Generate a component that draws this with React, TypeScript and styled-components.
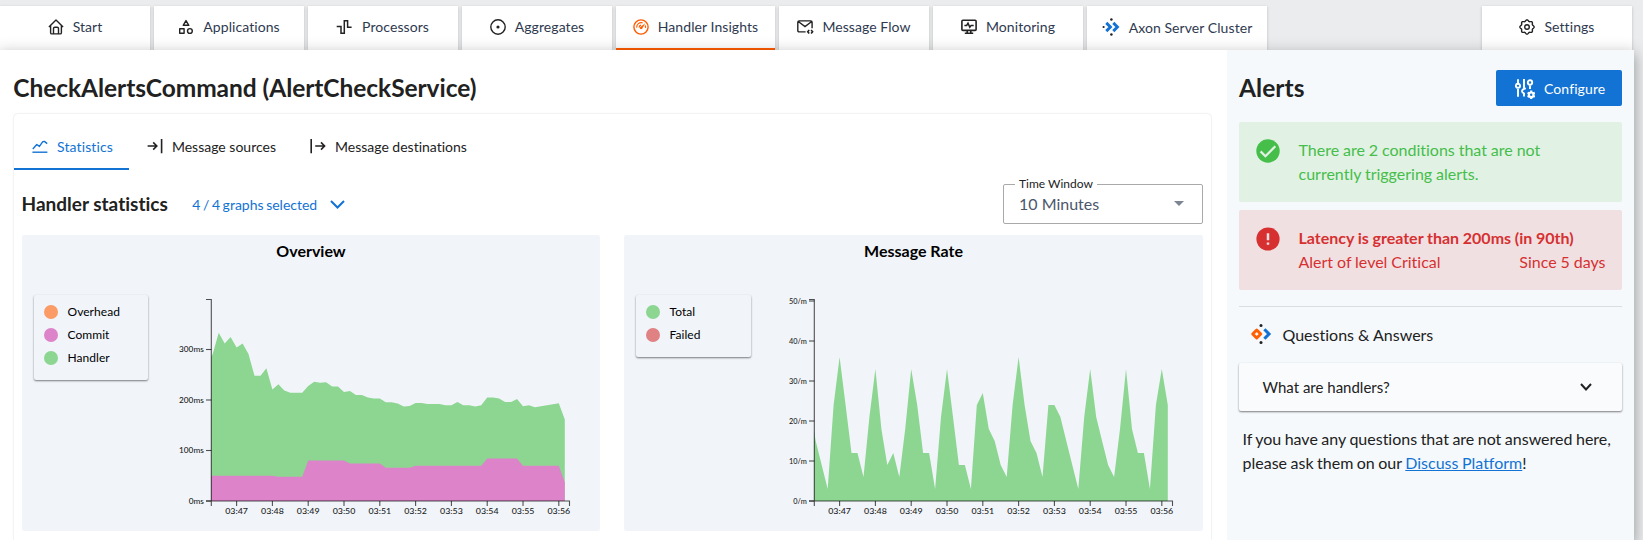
import React from 'react';
import styled, { createGlobalStyle } from 'styled-components';

const GlobalStyle = createGlobalStyle`
  * { box-sizing: border-box; }
  html, body { margin: 0; height: 540px; overflow: hidden; }
  body { background: #ebecee; color: #212121; font-family: Lato, sans-serif; font-variant-ligatures: none; }
  h1, h2, h3, p { margin: 0; }
  svg { display: block; flex: none; }
`;

/* ---------- icons ---------- */

const Glyph = styled.svg.attrs({ viewBox: '0 0 16 16' })`
  width: 16px;
  height: 16px;
  fill: none;
  stroke: currentColor;
  stroke-width: 1.4;
  overflow: visible;
`;

const HomeIcon = () => (
  <Glyph>
    <path d="M.9 8 8 1.1 15.1 8M2.6 6.6v7.1q0 1.2 1.2 1.2h8.4q1.2 0 1.2-1.2V6.6M5.5 14.8V9.6q0-1.3 1.3-1.3h2.4q1.3 0 1.3 1.3v5.2" strokeLinejoin="round" />
  </Glyph>
);

const ShapesIcon = () => (
  <Glyph strokeLinejoin="round">
    <path d="M8 1.6 10.8 6.3H5.2ZM1.7 9.7H6.1V14.3H1.7Z" />
    <circle cx="11.9" cy="12" r="2.4" />
  </Glyph>
);

const PulseIcon = () => (
  <Glyph>
    <path d="M-.3 7.4H4V14.2H7.3V1.7H10.6V8.2H14.6" strokeWidth="1.5" />
  </Glyph>
);

const TargetIcon = () => (
  <Glyph>
    <circle cx="8" cy="8" r="7.2" />
    <circle cx="8" cy="8" r="1.6" fill="currentColor" stroke="none" />
  </Glyph>
);

const GaugeIcon = () => (
  <Glyph>
    <circle cx="8" cy="8" r="7.1" />
    <path d="M3.7 8.6A4.5 4.5 0 0 1 9.6 3.9M6.2 8.6A2.4 2.4 0 0 1 8 6.1" strokeWidth="1.2" />
    <path d="M12.2 4.2 9.3 9.6A1.3 1.3 0 0 1 7 8.3Z" fill="currentColor" stroke="none" />
    <path d="M12 6.4Q12.7 7.4 12.5 8.8" strokeWidth="1.1" />
  </Glyph>
);

const MailIcon = () => (
  <Glyph>
    <path d="M8.6 12.9H2.2Q.8 12.9.8 11.5V3.3Q.8 1.9 2.2 1.9H13.7Q15.1 1.9 15.1 3.3V9.3M1.6 2.7 8 7.6 14.4 2.7" />
    <path d="M12.2 11 10.7 12.8 12.2 14.6M14.1 11 15.6 12.8 14.1 14.6" strokeWidth="1.6" />
  </Glyph>
);

const MonitorIcon = () => (
  <Glyph>
    <rect x=".9" y="1.2" width="14.2" height="10.2" rx="1" strokeWidth="1.6" />
    <path d="M3.4 6.4H5.7L7 4.2 8.8 8.2 10.1 6.4H12.7" strokeWidth="1.5" />
    <path d="M6.2 11.4V14.6M9.8 11.4V14.6M3.8 14.3H12.2" strokeWidth="1.6" />
  </Glyph>
);

const GearIcon = () => {
  const steps = Array.from({ length: 96 }, (_, i) => {
    const a = (i / 96) * Math.PI * 2;
    const r = 6.5 + 0.65 * Math.cos(a * 8);
    return `${(8 + r * Math.cos(a)).toFixed(2)} ${(8 + r * Math.sin(a)).toFixed(2)}`;
  });
  return (
    <Glyph>
      <path d={`M${steps.join('L')}Z`} />
      <circle cx="8" cy="8" r="2.3" />
    </Glyph>
  );
};

const AxonIcon = () => (
  <svg width="18" height="18" viewBox="0 0 18 18" fill="none">
    <path d="M4.3 4.9 8.4 9 4.3 13.1M11.3 4.9 15.4 9 11.3 13.1" stroke="#1273d4" strokeWidth="2.9" />
    <circle cx="9.4" cy="1.6" r="1.25" fill="#222" />
    <circle cx="9.4" cy="16.4" r="1.25" fill="#222" />
    <circle cx="1.6" cy="9" r="1.1" fill="#222" />
  </svg>
);

const QuestionsIcon = () => (
  <svg width="22" height="22" viewBox="0 0 22 22" fill="none">
    <path d="M6.7 7 10.7 11 6.7 15 2.7 11Z" stroke="#ff6000" strokeWidth="3" strokeLinejoin="round" />
    <path d="M14.4 6.2 19 11 14.4 15.8" stroke="#1273d4" strokeWidth="3.1" />
    <circle cx="11" cy="2.5" r="1.5" fill="#222" />
    <circle cx="11" cy="19.5" r="1.5" fill="#222" />
  </svg>
);

const StatsIcon = () => (
  <Glyph>
    <path d="M.8 11 4.8 6.5 7.4 8.4 10.8 3.6 12.4 3.4 15.2 5.6" strokeLinejoin="round" />
    <path d="M.4 14.2H15.4" />
  </Glyph>
);

const SourceIcon = () => (
  <Glyph>
    <path d="M.6 8H9.6M6.2 4.4 9.8 8 6.2 11.6M14.6 1V15.2" strokeWidth="1.6" />
  </Glyph>
);

const DestinationIcon = () => (
  <Glyph>
    <path d="M1.2 1V15.2M5.2 8H14.6M11 4.4 14.6 8 11 11.6" strokeWidth="1.6" />
  </Glyph>
);

const TuneIcon = () => (
  <svg width="20" height="20" viewBox="0 0 20 20" fill="none" stroke="#fff" strokeWidth="1.9">
    <path d="M3 .3V4M3 10V17.8M9 0V9.5M9 14V17.5M15 6.6V10" />
    <circle cx="3" cy="6.8" r="2.1" fill="#1273d4" />
    <circle cx="15" cy="3.5" r="2.2" />
    <path d="M10.9 9.4Q7 10 7 12.3 7 13.7 9.3 14.5" />
    <circle cx="16.2" cy="15.8" r="2.3" strokeWidth="2.2" />
    <path d="M16.2 11.6V13.6M16.2 18V20M12.6 13.7 14.3 14.7M18.1 16.9 19.8 17.9M19.8 13.7 18.1 14.7M14.3 16.9 12.6 17.9" strokeWidth="2.1" />
  </svg>
);

const CheckBadge = () => (
  <svg width="24" height="24" viewBox="0 0 24 24">
    <circle cx="12" cy="12" r="11.7" fill="#45be4a" />
    <path d="M4.6 12.4 9.4 17.2 19.3 7.2" fill="none" stroke="#e1f1e4" strokeWidth="2.3" />
  </svg>
);

const ErrorBadge = () => (
  <svg width="24" height="24" viewBox="0 0 24 24">
    <circle cx="12" cy="12" r="11.6" fill="#d63031" />
    <path d="M12 6.3V13.2M12 15.4V17.8" fill="none" stroke="#f1e0e2" strokeWidth="2.5" />
  </svg>
);

const Chevron = ({ width, height, weight }: { width: number; height: number; weight: number }) => (
  <svg width={width} height={height} fill="none" stroke="currentColor" strokeWidth={weight}>
    <path d={`M1 1 ${width / 2} ${height - 1.5} ${width - 1} 1`} />
  </svg>
);

/* ---------- navigation ---------- */

const NavBar = styled.nav`
  display: flex;
  gap: 4px;
  height: 50px;
  padding: 6px 11px 0 0;
`;

const NavTab = styled.a<{ $active?: boolean; $width?: number; $last?: boolean }>`
  display: flex;
  align-items: center;
  justify-content: center;
  gap: 9px;
  width: ${(p) => p.$width ?? 150}px;
  height: 44px;
  margin-left: ${(p) => (p.$last ? 'auto' : '0')};
  background: #fff;
  border-bottom: 2px solid ${(p) => (p.$active ? '#ff5c00' : 'transparent')};
  box-shadow: 0 1px 3px rgba(0, 0, 0, 0.2);
  color: #222;
  font-size: 14px;
  letter-spacing: 0.07px;
`;

const NavLabel = styled.span<{ $drop?: number }>`
  color: #2f3a50;
  padding-top: ${(p) => p.$drop ?? 0}px;
  padding-bottom: ${(p) => (p.$drop ? 0 : 1)}px;
`;

const tabs = [
  { label: 'Start', icon: <HomeIcon /> },
  { label: 'Applications', icon: <ShapesIcon /> },
  { label: 'Processors', icon: <PulseIcon /> },
  { label: 'Aggregates', icon: <TargetIcon /> },
  { label: 'Message Flow', icon: <MailIcon /> },
  { label: 'Monitoring', icon: <MonitorIcon /> },
];

const ActiveIcon = styled.span`
  color: #ff5c00;
`;

/* ---------- page ---------- */

const Page = styled.div`
  position: relative;
  display: flex;
  width: 1634px;
  height: 490px;
  background: #fff;
  box-shadow: 0 3px 14px 2px rgba(0, 0, 0, 0.2), 0 8px 10px 1px rgba(0, 0, 0, 0.14);
`;

const Content = styled.main`
  display: flex;
  flex-direction: column;
  width: 1227px;
  padding: 22px 16px 0 14px;
`;

const Title = styled.h1`
  margin-left: -0.7px;
  font-size: 24.5px;
  line-height: 32px;
  font-weight: 700;
  letter-spacing: -0.05px;
`;

const Card = styled.section`
  flex: 1;
  margin-top: 10px;
  border-radius: 4px 4px 0 0;
  box-shadow: 0 0 2px rgba(0, 0, 0, 0.18);
`;

const SubTabs = styled.div`
  display: flex;
  height: 56px;
`;

const SubTab = styled.div<{ $active?: boolean }>`
  display: flex;
  align-items: center;
  gap: 9px;
  padding: 10px 16px 0 18px;
  border-bottom: 2px solid ${(p) => (p.$active ? '#1273d4' : 'transparent')};
  color: ${(p) => (p.$active ? '#1273d4' : '#222')};
  font-size: 14px;
  letter-spacing: ${(p) => (p.$active ? 0.12 : 0)}px;
`;

const Toolbar = styled.div`
  display: flex;
  align-items: flex-start;
  height: 65px;
  padding: 14px 8px 0 7.5px;
`;

const SectionTitle = styled.h2`
  font-size: 19px;
  line-height: 24px;
  padding-top: 8px;
`;

const GraphPicker = styled.div`
  display: flex;
  align-items: center;
  gap: 13px;
  margin-left: 24.5px;
  padding-top: 12px;
  color: #1273d4;
  font-size: 14px;
  word-spacing: -1px;
`;

const Select = styled.fieldset`
  display: flex;
  align-items: center;
  justify-content: space-between;
  width: 200px;
  height: 47px;
  margin: -7px 0 0 auto;
  padding: 0 18px 7px 15px;
  border: 1px solid #a9a9a9;
  border-radius: 2px;
  color: #4b566b;
  font-size: 16px;
`;

const SelectLabel = styled.legend`
  margin-left: -4px;
  padding: 0 4px;
  color: #222;
  font-size: 12px;
  line-height: 14px;
`;

const Caret = styled.span`
  border: 5px solid transparent;
  border-top-color: #7d8594;
  border-bottom: 0;
`;

const Graphs = styled.div`
  display: grid;
  grid-template-columns: 578px 579px;
  justify-content: space-between;
  padding: 0 8px;
`;

const Panel = styled.article`
  height: 296px;
  padding: 6px 12px 0;
  background: #f1f5fa;
  border-radius: 2px;
`;

const PanelTitle = styled.h3`
  height: 54px;
  text-align: center;
  color: #000;
  font-size: 16px;
  line-height: 20px;
`;

const PanelBody = styled.div`
  display: flex;
  align-items: flex-start;
  gap: 22px;
`;

const Legend = styled.ul<{ $width: number }>`
  width: ${(p) => p.$width}px;
  margin: 0;
  padding: 5px 10px 11px;
  list-style: none;
  border-radius: 2px;
  box-shadow: 0 1px 2px rgba(0, 0, 0, 0.5);
  color: #000;
  font-size: 12px;
`;

const LegendItem = styled.li<{ $color: string }>`
  display: flex;
  align-items: center;
  gap: 9.5px;
  height: 23px;
  letter-spacing: 0.05px;
  &::before {
    content: '';
    width: 14px;
    height: 14px;
    border-radius: 50%;
    background: ${(p) => p.$color};
  }
`;

const Plot = styled.svg`
  font: 500 7.5px Lato, sans-serif;
  fill: #222;
`;

type Series = { color: string; values: number[] };

type ChartProps = {
  id: string;
  series: Series[];
  unitHeight: number;
  ticks: { value: number; label: string }[];
  labelWidth: number;
};

const LEFT = 41.3;
const TOP = 4.5;
const BASE = 206;
const FIRST = 66.6;
const STEP = 5.967;

const Chart = ({ id, series, unitHeight, ticks, labelWidth }: ChartProps) => (
  <Plot width="405" height="222">
    <clipPath id={id}>
      <rect x={LEFT} y={TOP} width="358" height={BASE - TOP} />
    </clipPath>
    <g clipPath={`url(#${id})`}>
      {series.map((s) => {
        const x = (i: number) => FIRST + (i - 5) * STEP;
        const line = s.values.map((v, i) => `${x(i).toFixed(1)} ${(BASE - v * unitHeight).toFixed(1)}`);
        return (
          <path
            key={s.color}
            fill={s.color}
            d={`M${x(0)} ${BASE}L${line.join('L')}L${x(s.values.length - 1)} ${BASE}Z`}
          />
        );
      })}
    </g>
    <g fill="none" stroke="#000" strokeOpacity=".68" strokeWidth="1.1">
      <path d={`M36 ${TOP}H${LEFT}V${BASE}H36M${LEFT} ${BASE + 5}V${BASE}H399.5V${BASE + 5}`} />
      {ticks.map((t) => (
        <path key={t.value} d={`M36 ${BASE - t.value * unitHeight}H${LEFT}`} />
      ))}
      {Array.from({ length: 10 }, (_, i) => (
        <path key={i} d={`M${FIRST + i * 6 * STEP} ${BASE}v5`} />
      ))}
    </g>
    {ticks.map((t) => (
      <text
        key={t.value}
        textAnchor="end"
        transform={`translate(33.8 ${BASE - t.value * unitHeight + 2.7}) scale(${labelWidth} 1)`}
      >
        {t.label}
      </text>
    ))}
    {Array.from({ length: 10 }, (_, i) => (
      <text key={i} textAnchor="middle" transform={`translate(${FIRST + i * 6 * STEP} 219) scale(1.18 1)`}>
        03:{47 + i}
      </text>
    ))}
  </Plot>
);

const run = (...pairs: [number, number][]) => pairs.flatMap(([v, n]) => Array<number>(n).fill(v));

const handlerMs = [
  270, 291, 333, 312, 325, 304, 312, 291, 248, 248, 263, 221, 231, 219, 214.5, 214.5, 214.5, 228, 236, 234, 235, 226.5,
  226.5, 216, 218, 210, 210, 205, 203, 203, 195.5, 195.5, 193, 187, 188, 194, 194, 192, 192, 192, 189.5, 189.5, 196,
  189.5, 189.5, 187, 189.5, 205, 205, 203, 196, 196, 202, 187.5, 189.5, 185.5, 187.5, 189.5, 191.5, 193.5, 161.5,
];

const commitMs = run([50, 12], [48, 5], [80, 7], [74, 6], [66, 5], [70, 12], [84, 6], [70, 7], [37, 1]);

const messageRate = [
  24, 15, 9, 3, 24, 36, 24, 12, 12, 6, 21, 33, 18, 9, 12, 6, 18, 33, 24, 12, 12, 3, 21, 33, 21, 9, 9, 3, 24, 27, 18, 15,
  9, 6, 24, 36, 24, 15, 12, 6, 24, 24, 21, 15, 9, 3, 21, 33, 21, 15, 9, 6, 18, 33, 18, 12, 12, 3, 24, 33, 24,
];

/* ---------- sidebar ---------- */

const Sidebar = styled.aside`
  width: 407px;
  padding: 20px 12px 0;
  background: #f5f9fc;
`;

const SidebarHead = styled.header`
  display: flex;
  align-items: center;
  justify-content: space-between;
  height: 36px;
  margin-bottom: 16px;
`;

const SidebarTitle = styled(Title)`
  margin-left: 0;
  letter-spacing: 0.05px;
`;

const ConfigureButton = styled.button`
  display: flex;
  align-items: center;
  gap: 9px;
  width: 126px;
  height: 36px;
  padding: 1px 0 0 19px;
  border: 0;
  border-radius: 2px;
  background: #1273d4;
  color: #fff;
  font: 14px Lato, sans-serif;
  letter-spacing: 0.1px;
  font-variant-ligatures: none;
`;

const Alert = styled.div<{ $tone: 'ok' | 'critical' }>`
  display: flex;
  gap: 18.5px;
  height: 80px;
  margin-bottom: 8px;
  padding: 16px 16.5px 0 17px;
  border-radius: 2px;
  background: ${(p) => (p.$tone === 'ok' ? '#e1f1e4' : '#f1e0e2')};
  color: ${(p) => (p.$tone === 'ok' ? '#45be4a' : '#d63031')};
  font-size: 16px;
  line-height: 24px;
  word-spacing: -0.2px;
  svg { margin-top: 1px; }
`;

const AlertBody = styled.div`
  flex: 1;
`;

const AlertLine = styled.div`
  display: flex;
  justify-content: space-between;
`;

const Divider = styled.hr`
  margin: 16px 0 0;
  border: 0;
  border-top: 1px solid #d9dee2;
`;

const QaTitle = styled.div`
  display: flex;
  align-items: center;
  gap: 10.5px;
  height: 56px;
  padding: 0 0 2px 11px;
  font-size: 16px;
`;

const Accordion = styled.div`
  display: flex;
  align-items: center;
  justify-content: space-between;
  height: 48px;
  padding: 0 30px 0 23.5px;
  background: #fafbfd;
  border-radius: 2px;
  box-shadow: 0 1px 2px rgba(0, 0, 0, 0.5);
  font-size: 15px;
`;

const Help = styled.p`
  padding: 16px 0 0 3.5px;
  font-size: 16px;
  line-height: 24px;
  white-space: nowrap;
  word-spacing: -0.6px;
`;

const HelpLink = styled.a`
  color: #1273d4;
  text-decoration: underline;
`;

export default function App() {
  return (
    <>
      <GlobalStyle />
      <NavBar>
        {tabs.slice(0, 4).map((t) => (
          <NavTab key={t.label}>
            {t.icon}
            <NavLabel>{t.label}</NavLabel>
          </NavTab>
        ))}
        <NavTab $active $width={159}>
          <ActiveIcon>
            <GaugeIcon />
          </ActiveIcon>
          <NavLabel>Handler Insights</NavLabel>
        </NavTab>
        {tabs.slice(4).map((t) => (
          <NavTab key={t.label}>
            {t.icon}
            <NavLabel>{t.label}</NavLabel>
          </NavTab>
        ))}
        <NavTab $width={180}>
          <AxonIcon />
          <NavLabel $drop={1}>Axon Server Cluster</NavLabel>
        </NavTab>
        <NavTab $last>
          <GearIcon />
          <NavLabel>Settings</NavLabel>
        </NavTab>
      </NavBar>
      <Page>
        <Content>
          <Title>CheckAlertsCommand (AlertCheckService)</Title>
          <Card>
            <SubTabs>
              <SubTab $active>
                <StatsIcon />
                Statistics
              </SubTab>
              <SubTab>
                <SourceIcon />
                Message sources
              </SubTab>
              <SubTab>
                <DestinationIcon />
                Message destinations
              </SubTab>
            </SubTabs>
            <Toolbar>
              <SectionTitle>Handler statistics</SectionTitle>
              <GraphPicker>
                4 / 4 graphs selected
                <Chevron width={15} height={9} weight={2} />
              </GraphPicker>
              <Select>
                <SelectLabel>Time Window</SelectLabel>
                10 Minutes
                <Caret />
              </Select>
            </Toolbar>
            <Graphs>
              <Panel>
                <PanelTitle>Overview</PanelTitle>
                <PanelBody>
                  <Legend $width={114}>
                    <LegendItem $color="#fb9b66">Overhead</LegendItem>
                    <LegendItem $color="#dd83c9">Commit</LegendItem>
                    <LegendItem $color="#8cd691">Handler</LegendItem>
                  </Legend>
                  <Chart
                    id="overview-area"
                    unitHeight={0.505}
                    labelWidth={1.1}
                    series={[
                      { color: '#8cd691', values: handlerMs },
                      { color: '#dd83c9', values: commitMs },
                    ]}
                    ticks={[0, 100, 200, 300].map((value) => ({ value, label: `${value}ms` }))}
                  />
                </PanelBody>
              </Panel>
              <Panel>
                <PanelTitle>Message Rate</PanelTitle>
                <PanelBody>
                  <Legend $width={115}>
                    <LegendItem $color="#8cd691">Total</LegendItem>
                    <LegendItem $color="#e08284">Failed</LegendItem>
                  </Legend>
                  <Chart
                    id="rate-area"
                    unitHeight={4}
                    labelWidth={0.98}
                    series={[{ color: '#8cd691', values: messageRate }]}
                    ticks={[0, 10, 20, 30, 40, 50].map((value) => ({ value, label: `${value}/m` }))}
                  />
                </PanelBody>
              </Panel>
            </Graphs>
          </Card>
        </Content>
        <Sidebar>
          <SidebarHead>
            <SidebarTitle as="h2">Alerts</SidebarTitle>
            <ConfigureButton>
              <TuneIcon />
              Configure
            </ConfigureButton>
          </SidebarHead>
          <Alert $tone="ok">
            <CheckBadge />
            <AlertBody>
              There are 2 conditions that are not
              <br />
              currently triggering alerts.
            </AlertBody>
          </Alert>
          <Alert $tone="critical">
            <ErrorBadge />
            <AlertBody>
              <b>Latency is greater than 200ms (in 90th)</b>
              <AlertLine>
                <span>Alert of level Critical</span>
                <span>Since 5 days</span>
              </AlertLine>
            </AlertBody>
          </Alert>
          <Divider />
          <QaTitle>
            <QuestionsIcon />
            Questions &amp; Answers
          </QaTitle>
          <Accordion>
            What are handlers?
            <Chevron width={12} height={8} weight={2} />
          </Accordion>
          <Help>
            If you have any questions that are not answered here,
            <br />
            please ask them on our <HelpLink>Discuss Platform</HelpLink>!
          </Help>
        </Sidebar>
      </Page>
    </>
  );
}
